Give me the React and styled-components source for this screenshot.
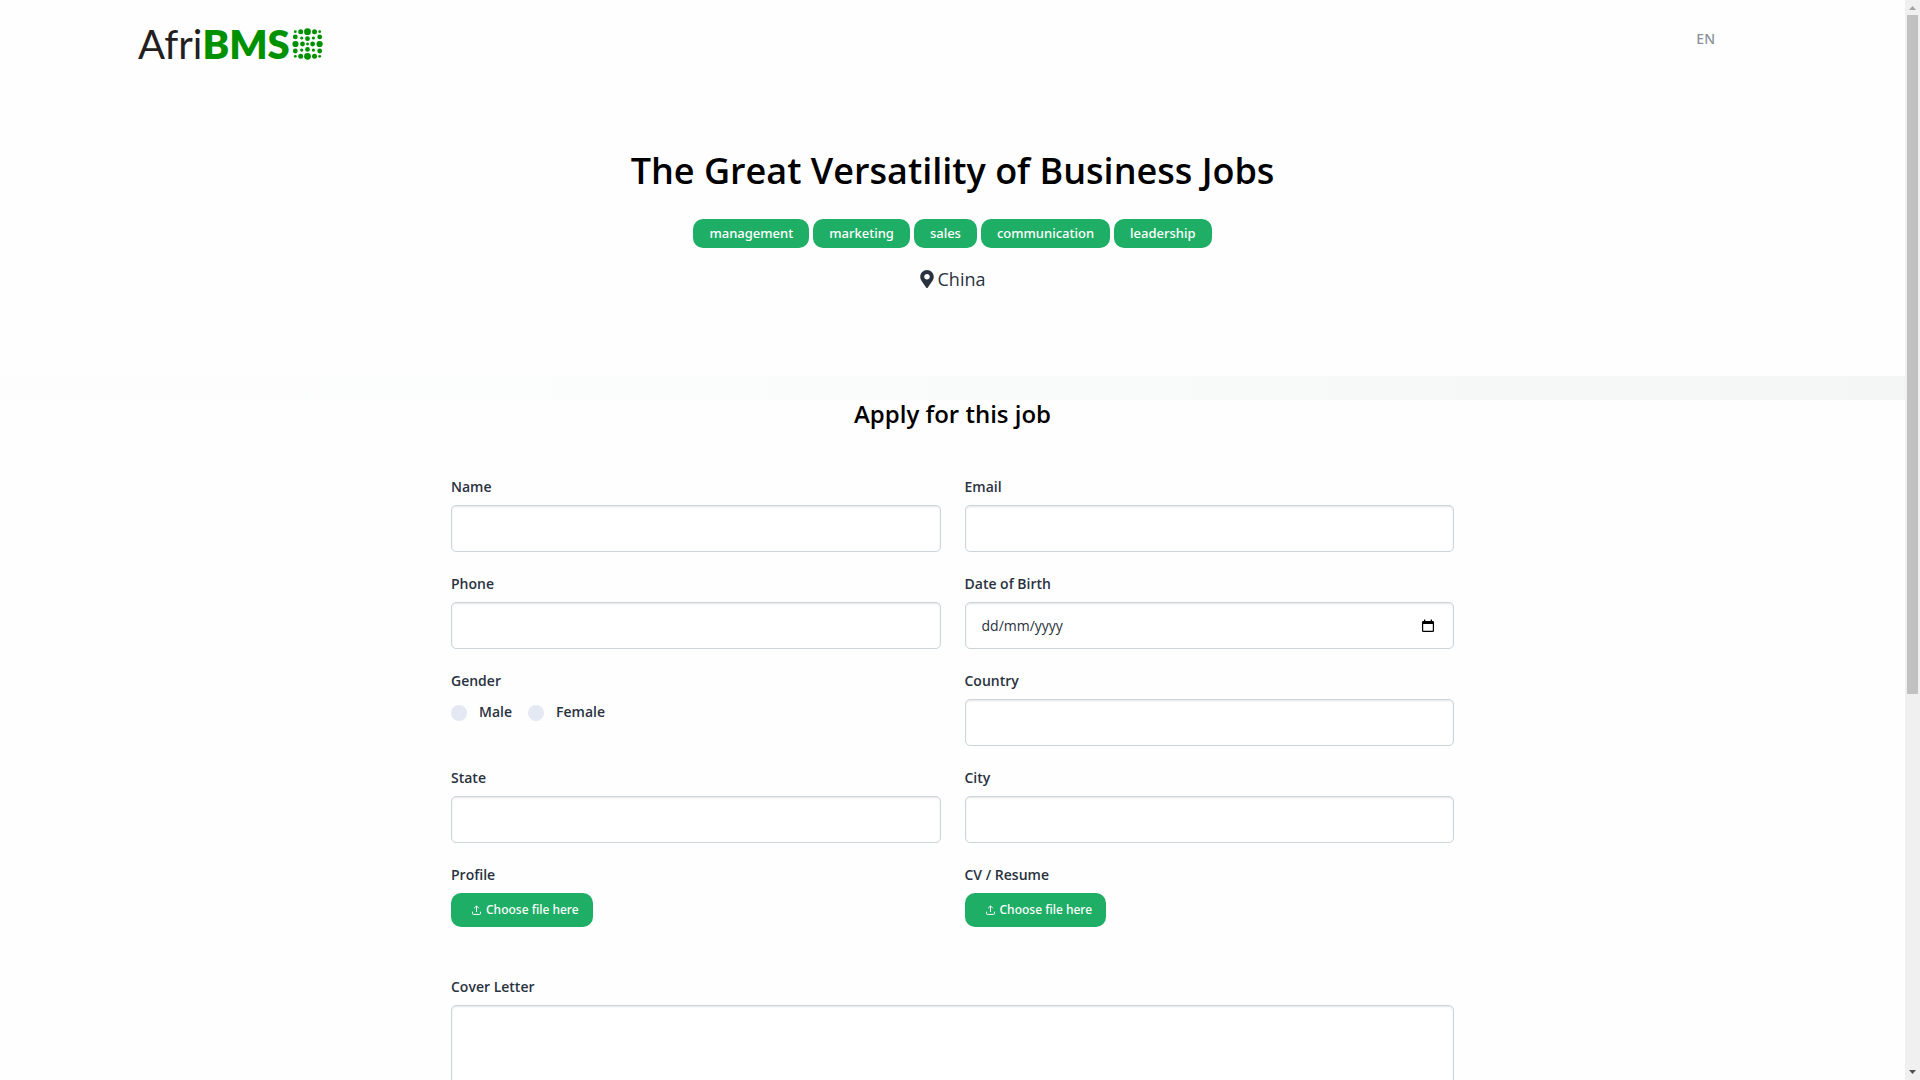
import React from "react";
import styled, { createGlobalStyle } from "styled-components";

const GlobalStyle = createGlobalStyle`
  *, *::before, *::after { box-sizing: border-box; }
  body {
    margin: 0;
    background: #fefefe;
    color: #29323e;
    font-family: "Open Sans", "Noto Sans", sans-serif;
    font-size: 14px;
    line-height: 20px;
  }
`;

const Shell = styled.div`
  display: grid;
  grid-template-columns: minmax(0, 1fr) 15px;
  height: 100vh;
`;

const Page = styled.div`
  overflow-y: auto;
  scrollbar-width: none;
`;

const ScrollColumn = styled.div`
  display: flex;
  flex-direction: column;
  align-items: center;
  background: #f0f0f0;
`;

const ScrollArrow = styled.svg`
  display: block;
  width: 15px;
  height: 15px;
  fill: ${(p) => p.$color};
`;

const Thumb = styled.div`
  flex: 679;
  width: 11px;
  background: #c1c1c1;
`;

const TrackRest = styled.div`
  flex: 371;
`;

const Header = styled.header`
  display: flex;
  justify-content: space-between;
  align-items: flex-start;
  padding: 20px 190px 0 138px;
  height: 88px;
`;

const Brand = styled.a`
  display: flex;
  align-items: center;
  color: #231f20;
  font-family: Lato, sans-serif;
  font-size: 40px;
  font-weight: 400;
  line-height: 48px;
  text-decoration: none;
`;

const BrandStrong = styled.span`
  color: #009100;
  font-weight: 800;
`;

const BrandMark = styled.svg`
  width: 32px;
  height: 32px;
  margin-left: 2px;
  fill: #009100;
`;

const Language = styled.a`
  margin-top: 9px;
  color: #8b919b;
  font-family: "Noto Sans", sans-serif;
  font-weight: 500;
  text-decoration: none;
`;

const Hero = styled.section`
  display: flex;
  flex-direction: column;
  align-items: center;
  height: 288px;
  padding-top: 56px;
`;

const Title = styled.h1`
  margin: 0 0 21px;
  color: #000;
  font-size: 36px;
  font-weight: 600;
  line-height: 54px;
`;

const Tags = styled.ul`
  display: flex;
  gap: 4px;
  margin: 0;
  padding: 0;
  list-style: none;
`;

const Tag = styled.li`
  padding: 4px 16px 5px;
  border-radius: 10px;
  background: #1fae66;
  color: #fff;
  font-family: "Noto Sans", sans-serif;
  font-size: 13px;
  font-weight: 500;
`;

const Place = styled.p`
  display: flex;
  align-items: center;
  gap: 4px;
  margin: 17px 0 0;
  font-size: 18px;
  line-height: 28px;
`;

const PinIcon = styled.svg`
  width: 14px;
  height: 18px;
  fill: #29323e;
`;

const Band = styled.div`
  height: 24px;
  background: linear-gradient(100deg, #fdfdfd, #fafcfb 45%, #f4f6f5);
`;

const Form = styled.form`
  max-width: 1003px;
  margin: 0 auto;
  padding-bottom: 48px;
`;

const FormTitle = styled.h2`
  margin: 0 0 49px;
  color: #000;
  font-size: 24px;
  font-weight: 600;
  line-height: 28px;
  text-align: center;
`;

const Fields = styled.div`
  display: grid;
  grid-template-columns: 1fr 1fr;
  grid-template-rows: repeat(5, 97px) auto;
  column-gap: 24px;
`;

const Field = styled.div`
  display: flex;
  flex-direction: column;
  align-items: stretch;
`;

const WideField = styled(Field)`
  grid-column: 1 / -1;
  margin-top: 15px;
`;

const Group = styled.fieldset`
  margin: 0;
  padding: 0;
  border: 0;
  min-width: 0;
`;

const labelText = `
  margin: 0 0 8px;
  padding: 0;
  font-weight: 600;
  line-height: 20px;
`;

const Label = styled.label`
  ${labelText}
`;

const Legend = styled.legend`
  ${labelText}
`;

const InputFrame = styled.div`
  display: flex;
  align-items: center;
  height: 47px;
  padding: 0 19px 0 16px;
  border: 1px solid #ced4da;
  border-radius: 5px;
  background: #fff;
  box-shadow: inset 0 1px 2px rgba(31, 45, 61, 0.12);
`;

const Input = styled.input`
  flex: 1;
  min-width: 0;
  padding: 0;
  border: 0;
  outline: 0;
  background: transparent;
  color: #29323e;
  font: inherit;
  &::placeholder { color: #29323e; opacity: 1; }
`;

const DateButton = styled.button`
  display: flex;
  padding: 0;
  border: 0;
  background: none;
`;

const TextArea = styled.textarea`
  height: 150px;
  padding: 12px 16px;
  border: 1px solid #ced4da;
  border-radius: 5px;
  background: #fff;
  box-shadow: inset 0 1px 2px rgba(31, 45, 61, 0.12);
  font: inherit;
  resize: none;
`;

const Options = styled.div`
  display: flex;
  gap: 16px;
  padding-top: 3px;
`;

const Option = styled.label`
  display: flex;
  align-items: center;
  gap: 12px;
  font-weight: 600;
`;

const Radio = styled.input`
  appearance: none;
  width: 16px;
  height: 16px;
  margin: 2px 0 0;
  border-radius: 50%;
  background: #e4e8f2;
  &:checked { background: #1fae66; }
`;

const FileInput = styled.input`
  position: absolute;
  width: 1px;
  height: 1px;
  opacity: 0;
`;

const FileButton = styled.label`
  display: flex;
  align-items: center;
  align-self: flex-start;
  gap: 5px;
  height: 34px;
  padding: 0 14px 0 21px;
  border-radius: 10px;
  background: #1fae66;
  color: #fff;
  font-family: "Noto Sans", sans-serif;
  font-size: 12px;
  font-weight: 500;
`;

const dots = [
  [3.3, 3.7, 1.4], [8.7, 3.7, 2.5], [15.5, 3.7, 3.4], [22.5, 3.7, 2.5], [27.7, 3.7, 1.4],
  [3.3, 8.9, 2.4], [9.7, 10, 1.6], [15.5, 10.7, 2.4], [21.4, 10, 1.6], [27.7, 8.9, 2.4],
  [3.5, 16, 3.1], [10.5, 16, 2.4], [15.5, 16, 1.4], [20.6, 16, 2.4], [27.6, 16, 3.1],
  [3.3, 23, 2.4], [9.7, 22.1, 1.6], [15.5, 21.4, 2.4], [21.4, 22.1, 1.6], [27.7, 23, 2.4],
  [3.3, 28.3, 1.4], [8.7, 28.3, 2.5], [15.5, 28.3, 3.4], [22.5, 28.3, 2.5], [27.7, 28.3, 1.4],
];

function TextField({ id, label, type = "text" }) {
  return (
    <Field>
      <Label htmlFor={id}>{label}</Label>
      <InputFrame><Input id={id} type={type} /></InputFrame>
    </Field>
  );
}

function FileField({ id, label }) {
  return (
    <Field>
      <Label htmlFor={id}>{label}</Label>
      <FileButton htmlFor={id}>
        <svg width="9" height="10" viewBox="0 0 9 10" fill="none" stroke="#fff">
          <path d="M4.500 7V1M2.200 3.200 4.500 .9l2.300 2.300M.5 6.700v1.800q0 .9.9.9h6.200q.9 0 .9-.9V6.700" />
        </svg>
        Choose file here
      </FileButton>
      <FileInput id={id} type="file" />
    </Field>
  );
}

export default function App() {
  return (
    <Shell>
      <GlobalStyle />
      <Page>
        <Header>
          <Brand href="#">
            Afri<BrandStrong>BMS</BrandStrong>
            <BrandMark viewBox="0 0 32 32" aria-hidden="true">
              {dots.map(([x, y, r]) => <circle key={`${x}-${y}`} cx={x} cy={y} r={r} />)}
            </BrandMark>
          </Brand>
          <Language href="#">EN</Language>
        </Header>
        <main>
          <Hero>
            <Title>The Great Versatility of Business Jobs</Title>
            <Tags>
              {["management", "marketing", "sales", "communication", "leadership"].map((t) => (
                <Tag key={t}>{t}</Tag>
              ))}
            </Tags>
            <Place>
              <PinIcon viewBox="0 0 384 512" aria-hidden="true">
                <path d="M172.3 501.7C27 291 0 269.4 0 192 0 86 86 0 192 0s192 86 192 192c0 77.400-27 99-172.300 309.700-9.500 13.800-29.900 13.800-39.400 0zM192 272c44.200 0 80-35.800 80-80s-35.800-80-80-80-80 35.800-80 80 35.800 80 80 80z" />
              </PinIcon>
              China
            </Place>
          </Hero>
          <Band />
          <Form>
            <FormTitle>Apply for this job</FormTitle>
            <Fields>
              <TextField id="name" label="Name" />
              <TextField id="email" label="Email" type="email" />
              <TextField id="phone" label="Phone" type="tel" />
              <Field>
                <Label htmlFor="birth">Date of Birth</Label>
                <InputFrame>
                  <Input id="birth" placeholder="dd/mm/yyyy" />
                  <DateButton type="button" aria-label="Open calendar">
                    <svg width="12" height="14" viewBox="0 0 12 14">
                      <path fill="#000" d="M2 .5h1.300V2h5.400V.5H10V2h.7q1.300 0 1.300 1.200v8.600q0 1.200-1.200 1.200H1.200Q0 13 0 11.800V3.200Q0 2 1.300 2H2zM1.200 5v6.800h9.600V5z" />
                    </svg>
                  </DateButton>
                </InputFrame>
              </Field>
              <Group>
                <Legend>Gender</Legend>
                <Options>
                  <Option><Radio type="radio" name="gender" />Male</Option>
                  <Option><Radio type="radio" name="gender" />Female</Option>
                </Options>
              </Group>
              <TextField id="country" label="Country" />
              <TextField id="state" label="State" />
              <TextField id="city" label="City" />
              <FileField id="profile" label="Profile" />
              <FileField id="resume" label="CV / Resume" />
              <WideField>
                <Label htmlFor="cover">Cover Letter</Label>
                <TextArea id="cover" />
              </WideField>
            </Fields>
          </Form>
        </main>
      </Page>
      <ScrollColumn aria-hidden="true">
        <ScrollArrow $color="#a3a3a3" viewBox="0 0 15 15"><path d="M4 10l3.500-4 3.500 4z" /></ScrollArrow>
        <Thumb />
        <TrackRest />
        <ScrollArrow $color="#505050" viewBox="0 0 15 15"><path d="M4 5l3.500 4L11 5z" /></ScrollArrow>
      </ScrollColumn>
    </Shell>
  );
}
